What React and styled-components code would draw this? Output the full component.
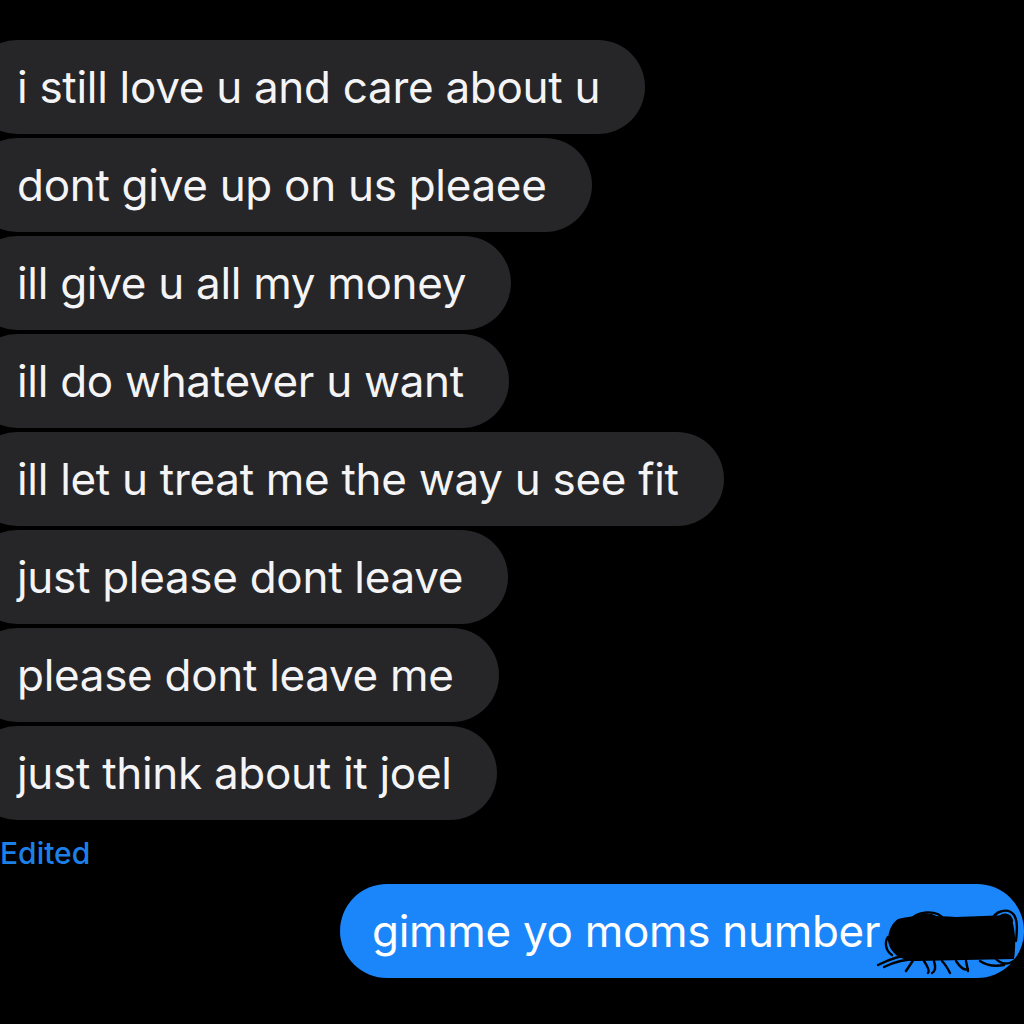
import styled, { createGlobalStyle } from "styled-components";

const GlobalStyle = createGlobalStyle`
  html, body {
    margin: 0;
    padding: 0;
    background: #000;
  }
  body {
    font-family: Inter, "Liberation Sans", sans-serif;
    -webkit-font-smoothing: antialiased;
  }
`;

const messages = [
  "i still love u and care about u",
  "dont give up on us pleaee",
  "ill give u all my money",
  "ill do whatever u want",
  "ill let u treat me the way u see fit",
  "just please dont leave",
  "please dont leave me",
  "just think about it joel",
];

export default function App() {
  return (
    <>
      <GlobalStyle />
      <Screen>
        <Thread>
          {messages.map((m) => (
            <Received key={m}>{m}</Received>
          ))}
        </Thread>
        <EditedLabel>Edited</EditedLabel>
        <SentRow>
          <Sent>
            gimme yo moms number
            <Scribble />
          </Sent>
        </SentRow>
      </Screen>
    </>
  );
}

// black marker scribble hiding the number
const Scribble = () => (
  <ScribbleSvg viewBox="0 0 144 70" width="144" height="70">
    <path
      d="M22 12 C40 7 60 9 80 10 L134 8 C140 20 140 40 138 52 L40 54 C24 54 14 46 12 34 C12 24 16 16 22 12 Z"
      fill="#000"
    />
    <g fill="none" stroke="#000" strokeWidth="2.4" strokeLinecap="round">
      <path d="M34 14 C40 4 60 2 68 12" />
      <path d="M38 12 C46 6 58 6 64 14" />
      <path d="M116 14 C118 4 132 0 138 8 C142 14 141 24 140 34" />
      <path d="M122 12 C126 6 134 6 136 14" />
      <path d="M2 58 C14 52 26 48 36 48" />
      <path d="M8 60 C20 54 32 52 42 52" />
      <path d="M38 52 L30 64" />
      <path d="M48 54 C52 60 54 64 52 66" />
      <path d="M58 54 C60 60 60 64 56 66" />
      <path d="M66 54 C70 58 72 62 74 66" />
      <path d="M80 54 C84 60 88 64 92 62" />
      <path d="M90 54 L92 64" />
      <path d="M104 54 C110 58 118 60 128 58" />
      <path d="M120 52 C126 58 134 58 140 52" />
      <path d="M16 26 C12 32 14 40 20 44" />
      <path d="M12 30 C8 36 10 44 16 48" />
    </g>
  </ScribbleSvg>
);

const Screen = styled.div`
  width: 1024px;
  height: 1024px;
  overflow: hidden;
  background: #000;
  display: flex;
  flex-direction: column;
  padding-top: 40px;
  box-sizing: border-box;
`;

const Thread = styled.div`
  display: flex;
  flex-direction: column;
  align-items: flex-start;
  gap: 4px;
`;

const Received = styled.div`
  margin-left: -30px;
  padding: 0 45px 0 47px;
  height: 94px;
  display: flex;
  align-items: center;
  background: #262628;
  border-radius: 47px;
  color: #f4f4f6;
  font-size: 44px;
  letter-spacing: -0.3px;
  white-space: nowrap;
`;

const EditedLabel = styled.div`
  margin-top: 17px;
  color: #1d7fe8;
  font-size: 30px;
  font-weight: 500;
  line-height: 32px;
`;

const SentRow = styled.div`
  display: flex;
  margin-top: 15px;
  padding-left: 340px;
`;

const Sent = styled.div`
  position: relative;
  width: 740px;
  height: 94px;
  display: flex;
  align-items: center;
  padding-left: 32px;
  box-sizing: border-box;
  background: #1b86fa;
  border-radius: 47px;
  color: #fff;
  font-size: 44px;
  letter-spacing: -0.3px;
  white-space: nowrap;
`;

const ScribbleSvg = styled.svg`
  position: absolute;
  left: 536px;
  top: 23px;
`;
